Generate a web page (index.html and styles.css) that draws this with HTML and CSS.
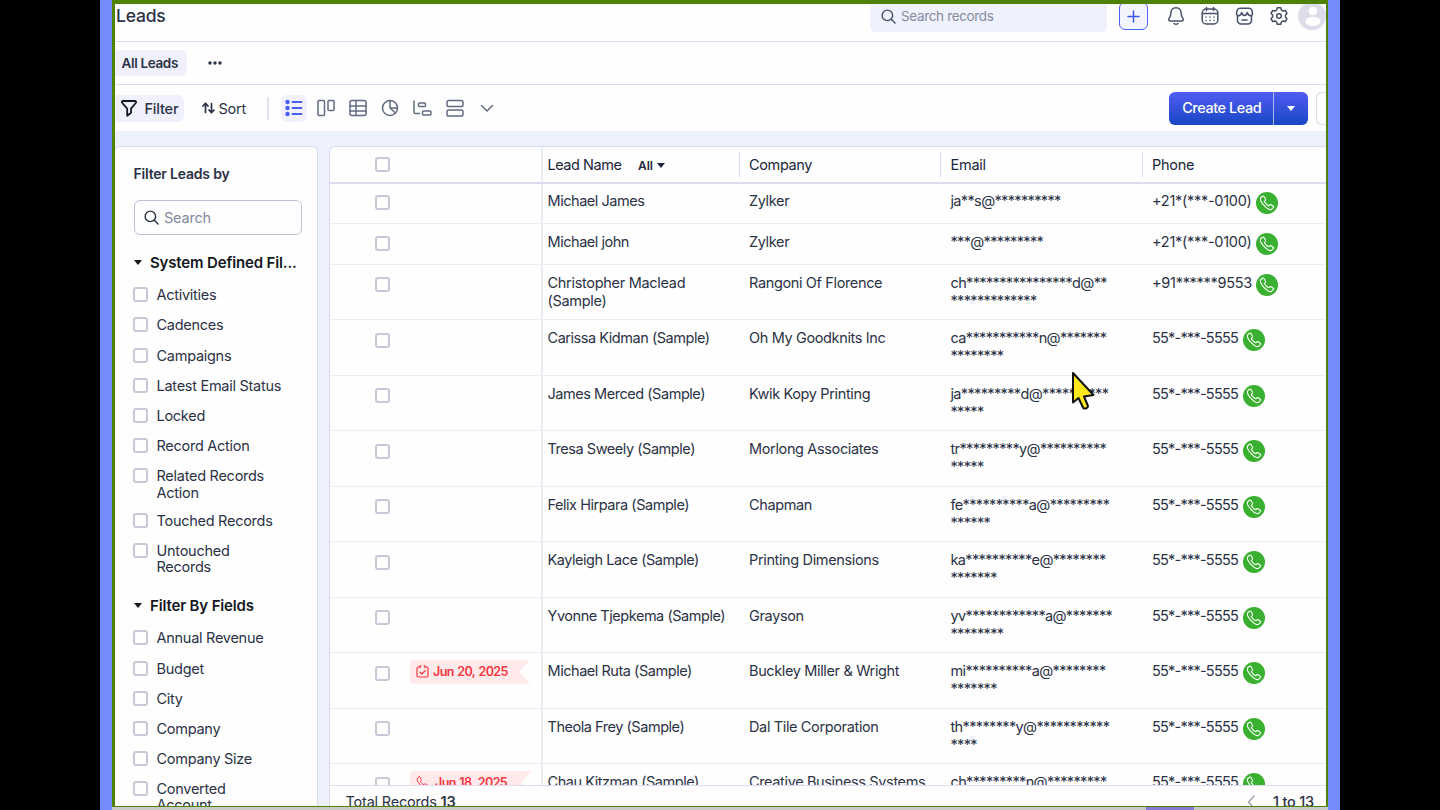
FILE: index.html
```html
<!DOCTYPE html>
<html lang="en">
<head>
    <meta charset="UTF-8">
    <meta name="viewport" content="width=device-width, initial-scale=1.0">
    <title>Leads</title>
    <link rel="stylesheet" href="styles.css">
</head>
<body>
<svg class="sprite" width="0" height="0">
    <symbol id="lens" viewBox="0 0 16 16"><circle cx="6.8" cy="6.8" r="5.6"/><path d="M10.9 10.9 15 15"/></symbol>
    <symbol id="phone" viewBox="0 0 16 16"><path d="M3.6 1.2 1.9 2.5C.9 3.5 1.4 6 4.3 9.7c3.6 4.2 6.8 5.6 8.4 4.5l1.700-1.600c.5-.6.3-1-.2-1.400l-2-1.400c-.6-.4-1.100-.3-1.600.2l-.8.8C8.200 10.200 6.500 8.500 5.300 6.400l.9-.8c.5-.5.5-1 .2-1.500L5 1.500C4.600.9 4.100.8 3.600 1.200Z"/></symbol>
</svg>

<div class="frame">
<div class="screen">
    <header class="topbar">
        <h1>Leads</h1>
        <div class="search-records">
            <svg class="icon" width="15" height="15"><use href="#lens"/></svg>
            <span>Search records</span>
        </div>
        <div class="add-btn">
            <svg width="13" height="13" viewBox="0 0 13 13"><path d="M6.500 1v11M1 6.500h11"/></svg>
        </div>
        <div class="top-icons">
            <svg class="icon" width="18" height="20" viewBox="0 0 18 20"><path d="M9 1.800c-3.200 0-5.200 2.400-5.200 5.400 0 3-.8 3.800-1.800 5.400-.7 1.200-.2 2.400 1.300 2.400h11.400c1.500 0 2-1.200 1.300-2.400-1-1.600-1.800-2.400-1.800-5.400 0-3-2-5.400-5.200-5.400Z"/><path d="M7 17.500c1.200.9 2.800.9 4 0"/></svg>
            <svg class="icon" width="18" height="20" viewBox="0 0 18 20"><rect x="1.200" y="3" width="15.600" height="15" rx="4"/><path d="M1.500 7.500h15M5.500 1.500v3M12.500 1.500v3"/><path class="dots" d="M5 11h0M9 11h0M13 11h0M5 14.500h0M9 14.500h0M13 14.500h0"/></svg>
            <svg class="icon" width="19" height="20" viewBox="0 0 19 20"><path d="M2.500 9.500v5a3.500 3.500 0 0 0 3.500 3.500h7a3.500 3.500 0 0 0 3.500-3.500v-5M7 14h5"/><path d="M5 2.200h9c1.500 0 2.500.8 2.800 2l.7 3c.3 1.500-.8 2.500-2.200 2.500S13 8.600 12.300 6.500c-.6 2.100-1.600 3-2.800 3S7.300 8.600 6.700 6.500C6 8.600 5.100 9.700 3.700 9.700S1.200 8.700 1.500 7.200l.7-3c.3-1.200 1.300-2 2.800-2Z"/></svg>
            <svg class="icon" width="18" height="20" viewBox="0 0 18 20"><path d="M7.300 1.800h3.400l.7 2.300 1.600.9 2.300-.6 1.700 2.900L15.400 9v2l1.600 1.700-1.700 2.900-2.300-.6-1.600.9-.7 2.300H7.300l-.7-2.300L5 15l-2.300.6L1 12.700 2.600 11V9L1 7.300l1.700-2.900L5 5l1.600-.9Z"/><circle cx="9" cy="10" r="2.300"/></svg>
        </div>
        <svg class="avatar" width="28" height="28" viewBox="0 0 28 28"><circle cx="14" cy="14" r="14" fill="#dcdcea"/><circle cx="15" cy="9" r="4.300" fill="#fff"/><ellipse cx="15" cy="19.500" rx="7.500" ry="4.700" fill="#fff"/></svg>
    </header>

    <nav class="views">
        <span class="view-tab">All Leads</span>
        <svg width="14" height="4" viewBox="0 0 14 4"><circle cx="2" cy="2" r="1.700"/><circle cx="7" cy="2" r="1.700"/><circle cx="12" cy="2" r="1.700"/></svg>
    </nav>

    <div class="toolbar">
        <div class="filter-btn">
            <svg width="16" height="17" viewBox="0 0 16 17"><path d="M2.200 1h11.600c1.200 0 1.600 1.200.9 2L10 8.600v4.200l-3.800 3V8.600L1.300 3C.6 2.200 1 1 2.200 1Z"/></svg>
            <span>Filter</span>
        </div>
        <div class="sort-btn">
            <svg width="13" height="12" viewBox="0 0 13 12"><path d="M3.500 10.500V1.500M1 4l2.500-2.800L6 4M9.500 1.500v9M7 8l2.500 2.700L12 8"/></svg>
            <span>Sort</span>
        </div>
        <div class="divider"></div>
        <div class="layouts">
            <div class="layout-item active"><svg width="18" height="18" viewBox="0 0 18 18"><path d="M7.500 3h9M7.500 9h9M7.500 15h9"/><circle cx="2.500" cy="3" r="1.200"/><circle cx="2.500" cy="9" r="1.200"/><circle cx="2.500" cy="15" r="1.200"/></svg></div>
            <div class="layout-item"><svg width="18" height="18" viewBox="0 0 18 18"><rect x="1" y="1.500" width="6.500" height="15" rx="1"/><rect x="11" y="1.500" width="6" height="10" rx="1"/></svg></div>
            <div class="layout-item"><svg width="18" height="18" viewBox="0 0 18 18"><rect x="1" y="1.500" width="16" height="15" rx="2"/><path d="M1 7h16M7 1.500v15M1 12h16"/></svg></div>
            <div class="layout-item"><svg width="18" height="18" viewBox="0 0 18 18"><circle cx="9" cy="9" r="7.500"/><path d="M9 1.500V9l5.500 5M9 9h7.500"/></svg></div>
            <div class="layout-item"><svg width="19" height="18" viewBox="0 0 19 18"><path d="M1 2v11c0 1 .5 1.500 1.500 1.500h4"/><rect x="5.500" y="4" width="7" height="3.500" rx="1"/><rect x="9.500" y="12" width="8.500" height="4" rx="1"/></svg></div>
            <div class="layout-item"><svg width="18" height="18" viewBox="0 0 18 18"><rect x="1" y="1.500" width="16" height="6" rx="1.800"/><rect x="1" y="11" width="16" height="6" rx="1.800"/></svg></div>
            <div class="layout-item"><svg width="14" height="18" viewBox="0 0 14 18"><path d="m1.500 6.500 5.500 5.500 5.500-5.500"/></svg></div>
        </div>
        <div class="create">
            <span class="create-label">Create Lead</span>
            <span class="create-more"><i class="caret"></i></span>
        </div>
        <div class="more-btn"></div>
    </div>

    <main class="content">
        <aside class="filters">
            <h2>Filter Leads by</h2>
            <div class="filter-search">
                <svg width="15" height="15"><use href="#lens"/></svg>
                <span>Search</span>
            </div>
            <h3><i class="caret"></i>System Defined Fil...</h3>
            <ul>
                <li><i class="check"></i>Activities</li>
                <li><i class="check"></i>Cadences</li>
                <li><i class="check"></i>Campaigns</li>
                <li><i class="check"></i>Latest Email Status</li>
                <li><i class="check"></i>Locked</li>
                <li><i class="check"></i>Record Action</li>
                <li><i class="check"></i>Related Records<br>Action</li>
                <li><i class="check"></i>Touched Records</li>
                <li><i class="check"></i>Untouched<br>Records</li>
            </ul>
            <h3><i class="caret"></i>Filter By Fields</h3>
            <ul>
                <li><i class="check"></i>Annual Revenue</li>
                <li><i class="check"></i>Budget</li>
                <li><i class="check"></i>City</li>
                <li><i class="check"></i>Company</li>
                <li><i class="check"></i>Company Size</li>
                <li><i class="check"></i>Converted<br>Account</li>
            </ul>
        </aside>

        <section class="leads">
            <div class="row head">
                <div class="select"><i class="check"></i></div>
                <div class="name">Lead Name <b>All</b><i class="caret"></i></div>
                <div class="company">Company</div>
                <div class="email">Email</div>
                <div class="phone">Phone</div>
            </div>
            <div class="rows">
                <div class="row first">
                    <div class="select"><i class="check"></i></div>
                    <div class="name">Michael James</div>
                    <div class="company">Zylker</div>
                    <div class="email">ja**s@**********</div>
                    <div class="phone">+21*(***-0100)<span class="call"><svg width="16" height="16"><use href="#phone"/></svg></span></div>
                </div>
                <div class="row short">
                    <div class="select"><i class="check"></i></div>
                    <div class="name">Michael john</div>
                    <div class="company">Zylker</div>
                    <div class="email">***@*********</div>
                    <div class="phone">+21*(***-0100)<span class="call"><svg width="16" height="16"><use href="#phone"/></svg></span></div>
                </div>
                <div class="row">
                    <div class="select"><i class="check"></i></div>
                    <div class="name loose">Christopher Maclead<br>(Sample)</div>
                    <div class="company">Rangoni Of Florence</div>
                    <div class="email">ch****************d@**<br>*************</div>
                    <div class="phone">+91******9553<span class="call"><svg width="16" height="16"><use href="#phone"/></svg></span></div>
                </div>
                <div class="row">
                    <div class="select"><i class="check"></i></div>
                    <div class="name">Carissa Kidman (Sample)</div>
                    <div class="company">Oh My Goodknits Inc</div>
                    <div class="email">ca***********n@*******<br>********</div>
                    <div class="phone local">55*-***-5555<span class="call"><svg width="16" height="16"><use href="#phone"/></svg></span></div>
                </div>
                <div class="row">
                    <div class="select"><i class="check"></i></div>
                    <div class="name">James Merced (Sample)</div>
                    <div class="company">Kwik Kopy Printing</div>
                    <div class="email">ja*********d@**********<br>*****</div>
                    <div class="phone local">55*-***-5555<span class="call"><svg width="16" height="16"><use href="#phone"/></svg></span></div>
                </div>
                <div class="row">
                    <div class="select"><i class="check"></i></div>
                    <div class="name">Tresa Sweely (Sample)</div>
                    <div class="company">Morlong Associates</div>
                    <div class="email">tr*********y@**********<br>*****</div>
                    <div class="phone local">55*-***-5555<span class="call"><svg width="16" height="16"><use href="#phone"/></svg></span></div>
                </div>
                <div class="row">
                    <div class="select"><i class="check"></i></div>
                    <div class="name">Felix Hirpara (Sample)</div>
                    <div class="company">Chapman</div>
                    <div class="email">fe**********a@*********<br>******</div>
                    <div class="phone local">55*-***-5555<span class="call"><svg width="16" height="16"><use href="#phone"/></svg></span></div>
                </div>
                <div class="row">
                    <div class="select"><i class="check"></i></div>
                    <div class="name">Kayleigh Lace (Sample)</div>
                    <div class="company">Printing Dimensions</div>
                    <div class="email">ka**********e@********<br>*******</div>
                    <div class="phone local">55*-***-5555<span class="call"><svg width="16" height="16"><use href="#phone"/></svg></span></div>
                </div>
                <div class="row">
                    <div class="select"><i class="check"></i></div>
                    <div class="name">Yvonne Tjepkema (Sample)</div>
                    <div class="company">Grayson</div>
                    <div class="email">yv************a@*******<br>********</div>
                    <div class="phone local">55*-***-5555<span class="call"><svg width="16" height="16"><use href="#phone"/></svg></span></div>
                </div>
                <div class="row">
                    <div class="select"><i class="check"></i>
                        <span class="due"><svg width="13" height="13" viewBox="0 0 13 13"><path d="M4 2H2.500C1.500 2 1 2.500 1 3.500v7c0 1 .5 1.500 1.500 1.500h8c1 0 1.500-.5 1.500-1.500v-7c0-1-.5-1.500-1.500-1.500H9M4 .8h1M8 .8h1v2M4 .8v2M4 7.200l1.800 1.800L9.200 5.700"/></svg>Jun 20, 2025</span>
                    </div>
                    <div class="name">Michael Ruta (Sample)</div>
                    <div class="company">Buckley Miller &amp; Wright</div>
                    <div class="email">mi**********a@********<br>*******</div>
                    <div class="phone local">55*-***-5555<span class="call"><svg width="16" height="16"><use href="#phone"/></svg></span></div>
                </div>
                <div class="row">
                    <div class="select"><i class="check"></i></div>
                    <div class="name">Theola Frey (Sample)</div>
                    <div class="company">Dal Tile Corporation</div>
                    <div class="email">th********y@***********<br>****</div>
                    <div class="phone local">55*-***-5555<span class="call"><svg width="16" height="16"><use href="#phone"/></svg></span></div>
                </div>
                <div class="row">
                    <div class="select"><i class="check"></i>
                        <span class="due due-call"><svg width="13" height="13"><use href="#phone"/></svg>Jun 18, 2025</span>
                    </div>
                    <div class="name">Chau Kitzman (Sample)</div>
                    <div class="company">Creative Business Systems</div>
                    <div class="email">ch*********n@*********</div>
                    <div class="phone local">55*-***-5555<span class="call"><svg width="16" height="16"><use href="#phone"/></svg></span></div>
                </div>
            </div>
            <footer class="pager">
                <span>Total Records <b>13</b></span>
                <span class="pages"><svg width="8" height="14" viewBox="0 0 8 14"><path d="M7 1 1.500 7 7 13"/></svg>1 to 13</span>
            </footer>
        </section>
    </main>
</div>
<div class="strip"></div>
</div>

<svg class="cursor" width="27" height="42" viewBox="0 0 27 42"><path d="M3 2v29.500l5.500-4.500 4.500 9.500c1.200 2.300 5.800.3 4.800-2L14 25.500l9.500-1.500Z"/></svg>
</body>
</html>
```
FILE: styles.css
```css
* {
    box-sizing: border-box;
}

body {
    margin: 0;
    height: 810px;
    overflow: hidden;
    background: #000;
    font-family: Inter, "Liberation Sans", sans-serif;
    font-size: 14.5px;
    letter-spacing: -0.2px;
    color: #2b3245;
}

h1, h2, h3, ul {
    margin: 0;
    padding: 0;
    list-style: none;
}

svg {
    flex: none;
    fill: none;
    stroke: currentColor;
    stroke-width: 1.5;
    stroke-linecap: round;
    stroke-linejoin: round;
}

.sprite {
    position: absolute;
}

.frame {
    width: 1240px;
    height: 810px;
    margin: 0 auto;
    border: solid #738cfa;
    border-width: 0 12px;
}

.screen {
    display: flex;
    flex-direction: column;
    height: 807px;
    border: solid #4d8204;
    border-width: 4px 2px 1px 3px;
    background: #fefefe;
    overflow: hidden;
}

.strip {
    height: 3px;
    background: linear-gradient(90deg, #c8cac4 0 85%, #8579d4 85% 89%, #c8cac4 89%);
}

/* header */
.topbar {
    display: flex;
    align-items: center;
    flex: none;
    height: 38px;
    padding-bottom: 13px;
    border-bottom: 1px solid #dcdcf0;
    color: #465068;
}

h1 {
    flex: 1;
    padding-left: 1px;
    font-size: 17.5px;
    font-weight: 500;
    line-height: 20px;
    color: #2b3245;
}

.search-records {
    display: flex;
    align-items: center;
    gap: 5px;
    width: 237px;
    height: 32px;
    padding-left: 11px;
    border-radius: 6px;
    background: #eff2fd;
    font-size: 13.5px;
    letter-spacing: -0.35px;
    color: #858aa0;
}

.search-records svg {
    color: #465068;
}

.add-btn {
    display: flex;
    align-items: center;
    justify-content: center;
    width: 29px;
    height: 28px;
    margin-left: 12px;
    border: 1.5px solid #4f63f0;
    border-radius: 6px;
    background: #f3f4fe;
    color: #3d55ee;
}

.top-icons {
    display: flex;
    gap: 16px;
    margin: 0 10px 0 19px;
}

.top-icons svg {
    stroke-width: 1.5;
}

.avatar {
    stroke: none;
}

.views {
    display: flex;
    align-items: center;
    flex: none;
    gap: 21px;
    height: 43px;
    border-bottom: 1px solid #dcdcf0;
}

.views svg {
    fill: currentColor;
    stroke: none;
}

.view-tab {
    height: 26px;
    width: 72px;
    padding-left: 6.5px;
    border-radius: 0 6px 6px 0;
    background: #f1f1fd;
    font-size: 13.5px;
    font-weight: 600;
    letter-spacing: -0.35px;
    line-height: 26px;
}

.toolbar {
    display: flex;
    align-items: center;
    flex: none;
    height: 46px;
}

.filter-btn, .sort-btn {
    display: flex;
    align-items: center;
}

.filter-btn {
    gap: 8px;
    width: 69px;
    height: 27px;
    padding-left: 5.5px;
    border-radius: 0 6px 6px 0;
    background: #f1f1fd;
}

.filter-btn svg {
    color: #15181f;
    stroke-width: 1.8;
}

.filter-btn span {
    font-weight: 500;
}

.sort-btn {
    gap: 4px;
    width: 82.5px;
    padding-left: 17.5px;
}

.sort-btn svg {
    stroke-width: 1.7;
}

.divider {
    width: 2px;
    height: 23px;
    background: #e3e3ee;
}

.layouts {
    display: flex;
    flex: 1;
    gap: 6px;
    margin-left: 12px;
    color: #626b82;
}

.layout-item {
    display: flex;
    align-items: center;
    justify-content: center;
    width: 26.2px;
    height: 27px;
}

.layout-item.active {
    border-radius: 6px;
    background: #f1f1fd;
    color: #4a5ff2;
}

.layout-item.active svg {
    stroke-width: 2;
}

.layout-item.active circle {
    fill: currentColor;
}

.create {
    display: flex;
    width: 139px;
    height: 33px;
    border-radius: 6px;
    background: linear-gradient(#505cf2, #1947c4);
    color: #fff;
    line-height: 32px;
}

.create-label {
    width: 104.5px;
    padding-left: 2px;
    border-right: 1px solid #aab8f5;
    font-weight: 500;
    letter-spacing: -0.45px;
    text-align: center;
}

.create-more {
    display: flex;
    flex: 1;
    align-items: center;
    justify-content: center;
}

.caret {
    display: inline-block;
    border: 4.5px solid transparent;
    border-top: 5px solid currentColor;
    border-bottom: 0;
}

.more-btn {
    width: 12px;
    height: 33px;
    margin: 0 -2px 0 8px;
    border: 1px solid #dcdce8;
    border-right: 0;
    border-radius: 6px 0 0 6px;
}

/* filters panel */
.content {
    display: flex;
    flex: 1;
    min-height: 0;
    gap: 10.5px;
    padding-top: 15px;
    background: #edf1fd;
}

.filters {
    flex: none;
    width: 203px;
    padding: 18px 15px 0 18.5px;
    border: 1px solid #dcdcf0;
    border-width: 1px 1px 0 0;
    border-radius: 6px 6px 0 0;
    background: #fefefe;
    overflow: hidden;
}

h2 {
    font-size: 14px;
    font-weight: 600;
    line-height: 18px;
}

.filter-search {
    display: flex;
    align-items: center;
    gap: 5px;
    height: 35px;
    margin: 17px 0 16px;
    padding-left: 9.5px;
    border: 1px solid #c0c0d6;
    border-radius: 6px;
    color: #858aa0;
}

.filter-search svg {
    color: #2b3245;
}

h3 {
    display: flex;
    align-items: center;
    gap: 8px;
    height: 22px;
    margin-bottom: 14.3px;
    font-size: 15px;
    font-weight: 600;
    letter-spacing: -0.15px;
    color: #15181f;
    white-space: nowrap;
}

.filters h3 .caret {
    margin-right: 0.5px;
}

.filters li {
    position: relative;
    min-height: 18.1px;
    margin-bottom: 12.1px;
    padding-left: 23px;
    letter-spacing: -0.27px;
    line-height: 16.1px;
}

.filters ul + h3 {
    margin-top: 19.5px;
    margin-bottom: 13.8px;
}

.check {
    display: block;
    width: 15px;
    height: 15px;
    border: 2px solid #c8c8d8;
    border-radius: 3px;
    background: #fefefe;
}

.filters .check {
    position: absolute;
    left: -0.5px;
    top: 0;
}

/* leads table */
.leads {
    display: flex;
    flex: 1;
    flex-direction: column;
    min-width: 0;
    border: solid #dcdcf0;
    border-width: 1px 0 0 1px;
    border-radius: 6px 0 0 0;
    background: #fefefe;
    overflow: hidden;
}

.row {
    display: flex;
    height: 55.5px;
    border-bottom: 1px solid #eaecf7;
    line-height: 18px;
}

.row > div {
    flex: none;
    padding: 9px 0 0 10px;
}

.row > .select {
    display: flex;
    width: 213.5px;
    padding: 12.5px 0 0 45px;
    border-right: 2px solid #ebebf3;
}

.row > .name {
    width: 195.5px;
    padding-left: 4.5px;
    letter-spacing: -0.46px;
}

.row > .name.loose {
    letter-spacing: -0.3px;
}

.row > .company, .row > .email {
    width: 201.5px;
}

.row > .company {
    padding-left: 10.5px;
    letter-spacing: -0.36px;
}

.row > .email {
    padding-left: 10.5px;
    letter-spacing: -0.64px;
}

.row > .phone {
    display: flex;
    flex: 1;
    padding-left: 10.5px;
    letter-spacing: -0.28px;
}

.row > .phone.local {
    letter-spacing: -0.77px;
}

.row.head {
    flex: none;
    height: 37px;
    border-bottom: 2px solid #dcdcf0;
    color: #20263a;
}

.head > .select {
    padding-top: 10px;
}

.head > .email {
    letter-spacing: -0.25px;
}

.head .name b {
    margin-left: 13px;
    margin-right: 4px;
    font-size: 12px;
    font-weight: 600;
    letter-spacing: -0.1px;
}

.head .caret {
    vertical-align: 2px;
}

.head > .company, .head > .email, .head > .phone {
    background: linear-gradient(#dcdcf0, #dcdcf0) 0 5px / 1px 25px no-repeat;
}

.rows {
    flex: 1;
    min-height: 0;
    overflow: hidden;
}

.row.first {
    height: 39.5px;
}

.first > div {
    padding-top: 8px;
}

.first > .select {
    padding-top: 11px;
}

.row.short {
    height: 41.3px;
}

.call {
    display: flex;
    align-items: center;
    justify-content: center;
    width: 22px;
    height: 22px;
    margin-left: 4px;
    border-radius: 50%;
    background: #39b02f;
    color: #fff;
}

.local .call {
    margin-left: 5px;
}

.call svg {
    stroke-width: 1.1;
}

.due {
    display: flex;
    align-items: center;
    gap: 4px;
    width: 120px;
    height: 24px;
    margin: -6px 0 0 20.5px;
    padding-left: 6px;
    border-radius: 4px 0 0 4px;
    background: #ffe9eb;
    clip-path: polygon(0 0, 100% 0, 91% 50%, 100% 100%, 0 100%);
    font-size: 12.5px;
    font-weight: 600;
    letter-spacing: -0.6px;
    word-spacing: 1px;
    color: #f5373f;
}

.due-call {
    gap: 6px;
    width: 122px;
}

.due svg {
    stroke-width: 1.2;
}

.pager {
    display: flex;
    justify-content: space-between;
    flex: none;
    height: 21px;
    padding: 6.5px 12px 0 16px;
    border-top: 1px solid #dcdcf0;
    line-height: 18px;
    white-space: nowrap;
}

.pager b {
    font-weight: 600;
}

.pages {
    display: flex;
    align-items: center;
    gap: 18px;
    height: 18px;
    font-weight: 500;
}

.pages svg {
    color: #a0a4b4;
}

.cursor {
    position: absolute;
    left: 1070px;
    top: 371px;
    fill: #ffe81c;
    stroke: #111;
    stroke-width: 2;
}
```
